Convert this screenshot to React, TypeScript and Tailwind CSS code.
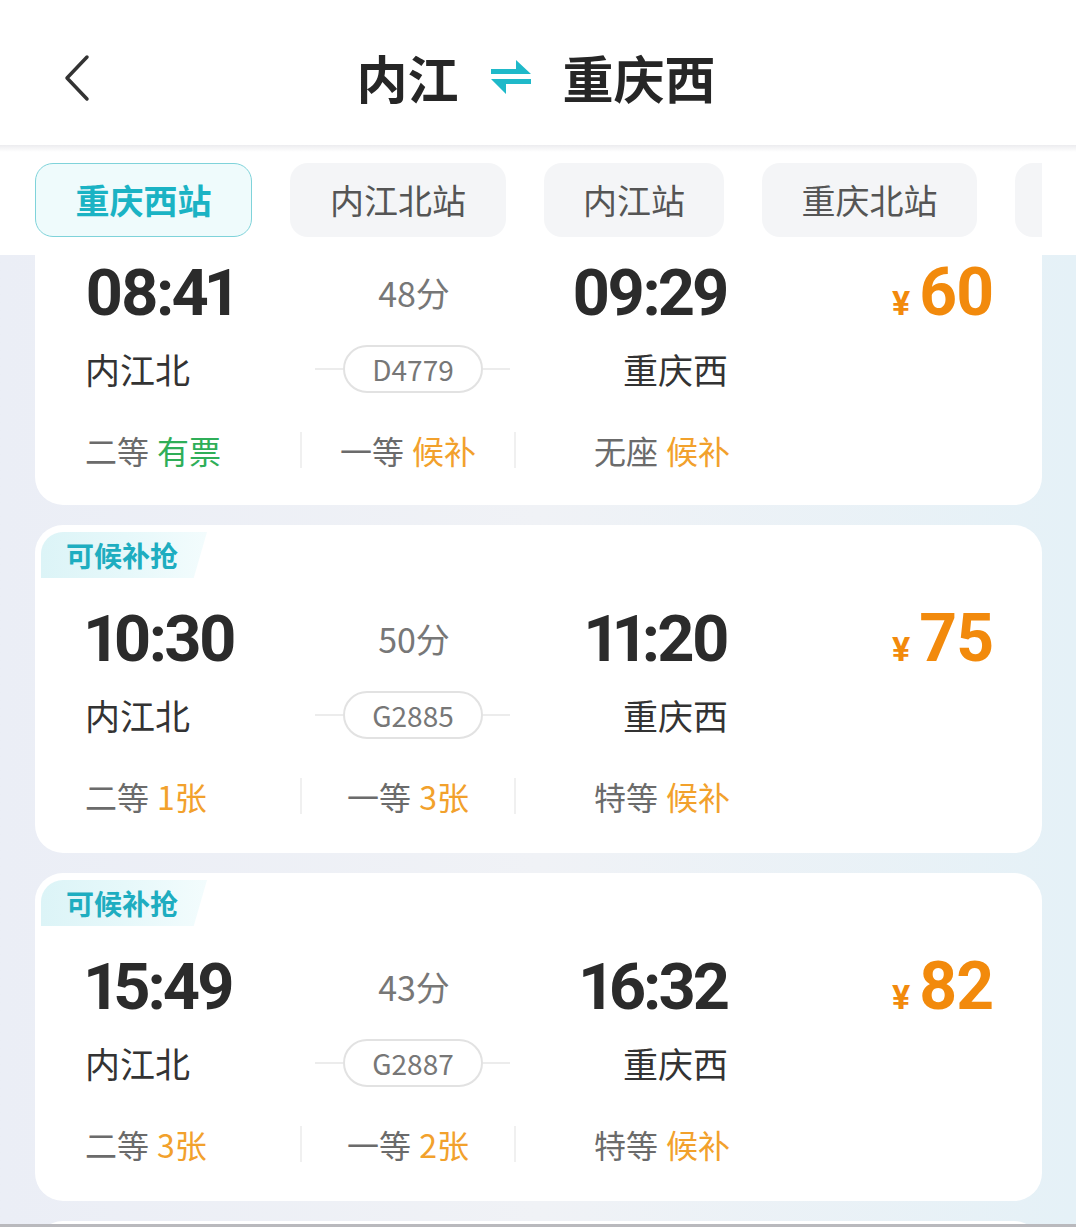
import React from "react";

type Seat = { label: string; value: string; tone: "green" | "orange" };
type Train = {
  dep: string;
  arr: string;
  dur: string;
  price: string;
  from: string;
  to: string;
  no: string;
  seats: Seat[];
  tag?: boolean;
  clipped?: boolean;
};

const trains: Train[] = [
  {
    dep: "08:41",
    arr: "09:29",
    dur: "48分",
    price: "60",
    from: "内江北",
    to: "重庆西",
    no: "D4779",
    seats: [
      { label: "二等", value: "有票", tone: "green" },
      { label: "一等", value: "候补", tone: "orange" },
      { label: "无座", value: "候补", tone: "orange" },
    ],
    clipped: true,
  },
  {
    dep: "10:30",
    arr: "11:20",
    dur: "50分",
    price: "75",
    from: "内江北",
    to: "重庆西",
    no: "G2885",
    seats: [
      { label: "二等", value: "1张", tone: "orange" },
      { label: "一等", value: "3张", tone: "orange" },
      { label: "特等", value: "候补", tone: "orange" },
    ],
    tag: true,
  },
  {
    dep: "15:49",
    arr: "16:32",
    dur: "43分",
    price: "82",
    from: "内江北",
    to: "重庆西",
    no: "G2887",
    seats: [
      { label: "二等", value: "3张", tone: "orange" },
      { label: "一等", value: "2张", tone: "orange" },
      { label: "特等", value: "候补", tone: "orange" },
    ],
    tag: true,
  },
];

const CJK = "font-['Noto_Sans_CJK_SC','Noto_Sans',sans-serif]";
const NUM = "font-['Roboto','Noto_Sans_CJK_SC',sans-serif]";

function SeatText({ seat }: { seat: Seat }) {
  return (
    <span className={`${CJK} text-[32px] leading-[40px] whitespace-nowrap`}>
      <span className="text-[#6b6b6b]">{seat.label}</span>
      <span className="inline-block w-[8px]" />
      <span className={seat.tone === "green" ? "text-[#2fae58]" : "text-[#f2a12c]"}>{seat.value}</span>
    </span>
  );
}

function TrainCard({ t }: { t: Train }) {
  return (
    <div
      className={`bg-white w-[1007px] ml-[35px] shrink-0 ${
        t.clipped ? "rounded-b-[28px] pt-0 pb-[35px]" : "rounded-[28px] pt-[7px] pb-[37px]"
      }`}
    >
      {t.tag && (
        <div className="pl-[6px]">
          <div className="w-[166px] h-[46px] rounded-tl-[22px] bg-gradient-to-r from-[#dcf4f7] via-[#e6f8fa] to-[#f3fcfd] [clip-path:polygon(0_0,100%_0,92%_100%,0_100%)] flex items-center pl-[25px]">
            <span className={`${CJK} text-[28px] font-bold text-[#1eadc0] leading-[46px]`}>可候补抢</span>
          </div>
        </div>
      )}
      <div className={`pl-[50px] ${t.tag ? "mt-[23px]" : ""}`}>
        {/* time row */}
        <div className="grid grid-cols-[215px_216px_214px_263px] h-[66px] items-center">
          <div className={`${NUM} proportional-nums text-[65px] font-bold text-[#2b2b2b] leading-[76px] tracking-[-3px]`}>
            {t.dep}
          </div>
          <div className={`${CJK} text-[34px] text-[#777] text-center pl-[12px] leading-[44px]`}>{t.dur}</div>
          <div
            className={`${NUM} proportional-nums text-[65px] font-bold text-[#2b2b2b] leading-[76px] tracking-[-3px] text-right pr-[3px]`}
          >
            {t.arr}
          </div>
          <div className="flex items-baseline justify-end gap-[9px] text-[#f28a0c]">
            <span className={`${NUM} text-[34px] font-bold leading-[40px]`}>¥</span>
            <span className={`${NUM} text-[66px] font-bold leading-[76px] tracking-[-1px]`}>{t.price}</span>
          </div>
        </div>
        {/* station row */}
        <div className="grid grid-cols-[215px_216px_214px_263px] h-[50px] items-center mt-[23px]">
          <div className={`${CJK} text-[35px] text-[#333] leading-[46px]`}>{t.from}</div>
          <div className="flex items-center pl-[15px]">
            <div className="w-[28px] h-[2px] bg-[#ececec]" />
            <div className="w-[140px] h-[48px] rounded-full border-2 border-[#e2e2e2] flex items-center justify-center">
              <span className={`${CJK} text-[28px] text-[#777] leading-[40px]`}>{t.no}</span>
            </div>
            <div className="w-[27px] h-[2px] bg-[#ececec]" />
          </div>
          <div className={`${CJK} text-[35px] text-[#333] leading-[46px] text-right pr-[2px]`}>{t.to}</div>
          <div />
        </div>
        {/* seat row */}
        <div className="grid grid-cols-[215px_216px_214px_263px] h-[40px] items-center mt-[36px]">
          <div className="flex items-center">
            <SeatText seat={t.seats[0]} />
          </div>
          <div className="flex items-center justify-center border-l-2 border-r-2 border-[#f0f0f0] h-[36px]">
            <SeatText seat={t.seats[1]} />
          </div>
          <div className="flex items-center justify-end">
            <SeatText seat={t.seats[2]} />
          </div>
          <div />
        </div>
      </div>
    </div>
  );
}

export default function App() {
  return (
    <div className="w-[1076px] h-[1227px] overflow-hidden flex flex-col bg-gradient-to-r from-[#ebeef6] via-[#f0f2f6] to-[#e5f1f7]">
      {/* header */}
      <div className="h-[145px] bg-white grid grid-cols-[1fr_auto_1fr] items-center shrink-0">
        <div className="pl-[62px] pt-[10px]">
          <svg width="30" height="48" viewBox="0 0 30 48" fill="none">
            <path d="M25 3 L5 24 L25 45" stroke="#333" strokeWidth="3.5" strokeLinecap="round" strokeLinejoin="round" />
          </svg>
        </div>
        <div className="flex items-center pt-[8px] pr-[4px]">
          <span className={`${CJK} text-[51px] font-bold text-[#262626] leading-[60px]`}>内江</span>
          <svg className="mx-[30px]" width="44" height="40" viewBox="0 0 44 40">
            <path d="M2 12 H27 V3 L42 17 H2 Z" fill="#1fb9c9" />
            <path d="M42 22 V27 H17 V37 L2 22 Z" fill="#1fb9c9" />
          </svg>
          <span className={`${CJK} text-[51px] font-bold text-[#262626] leading-[60px]`}>重庆西</span>
        </div>
        <div />
      </div>
      {/* tab bar */}
      <div className="h-[110px] bg-white shrink-0 flex flex-col">
        <div className="h-[7px] bg-gradient-to-b from-[#ececef] to-white" />
        <div className="w-[1007px] ml-[35px] overflow-hidden mt-[11px]">
          <div className="flex gap-[38px] w-max">
            <div className="h-[74px] w-[217px] rounded-[18px] border-[1.5px] border-[#7fd3da] bg-[#effbfc] flex items-center justify-center">
              <span className={`${CJK} text-[34px] font-bold text-[#1bb3c4] leading-[44px]`}>重庆西站</span>
            </div>
            <div className="h-[74px] w-[216px] rounded-[18px] bg-[#f4f5f7] flex items-center justify-center">
              <span className={`${CJK} text-[34px] text-[#555] leading-[44px]`}>内江北站</span>
            </div>
            <div className="h-[74px] w-[180px] rounded-[18px] bg-[#f4f5f7] flex items-center justify-center">
              <span className={`${CJK} text-[34px] text-[#555] leading-[44px]`}>内江站</span>
            </div>
            <div className="h-[74px] w-[215px] rounded-[18px] bg-[#f4f5f7] flex items-center justify-center">
              <span className={`${CJK} text-[34px] text-[#555] leading-[44px]`}>重庆北站</span>
            </div>
            <div className="h-[74px] w-[216px] rounded-[18px] bg-[#f4f5f7]" />
          </div>
        </div>
      </div>
      {/* list */}
      <div className="flex-1 overflow-hidden flex flex-col gap-[20px]">
        {trains.map((t) => (
          <TrainCard key={t.no} t={t} />
        ))}
        <div className="bg-white w-[1007px] ml-[35px] h-[200px] rounded-t-[28px] shrink-0" />
      </div>
      <div className="h-[3px] bg-[#b9b9bd] shrink-0" />
    </div>
  );
}
